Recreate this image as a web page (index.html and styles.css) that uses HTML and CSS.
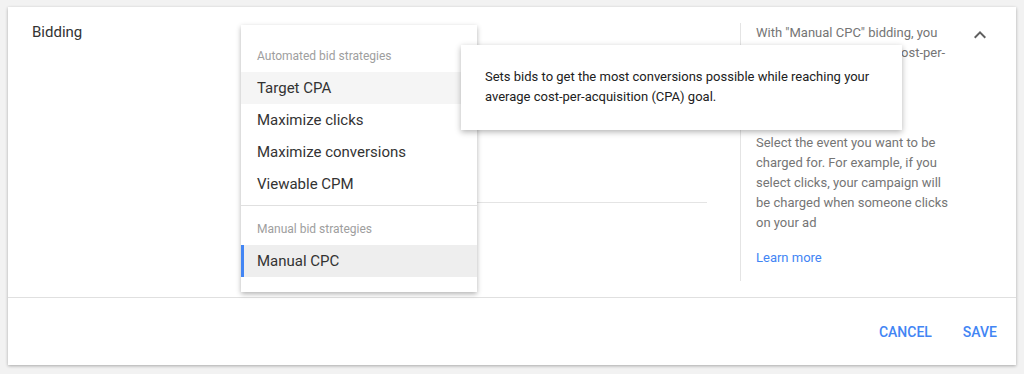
FILE: index.html
```html
<!DOCTYPE html>
<html lang="en">

<head>
  <meta charset="UTF-8" />
  <title>Bidding</title>
  <link rel="stylesheet" href="styles.css">
</head>

<body>
  <div class="card">
    <div class="section">
      <div class="section-label">Bidding</div>
      <div class="section-field">
        <div class="field-input"></div>
      </div>
      <div class="section-help">
        <p class="help-intro">With "Manual CPC" bidding, you set your own maximum cost-per-click (CPC) for your ads.</p>
        <p>Select the event you want to be charged for. For example, if you select clicks, your campaign will be charged when someone clicks on your ad</p>
        <a class="help-link" href="#">Learn more</a>
      </div>
      <div class="section-toggle">
        <svg width="24" height="24" viewBox="0 0 24 24">
          <path d="M7.41 15.41L12 10.83l4.59 4.58L18 14l-6-6-6 6z" fill="#5f5f5f" />
        </svg>
      </div>
    </div>

    <div class="actions">
      <button class="btn">Cancel</button>
      <button class="btn">Save</button>
    </div>

    <div class="menu">
      <div class="menu-group">Automated bid strategies</div>
      <div class="menu-item hover">Target CPA</div>
      <div class="menu-item">Maximize clicks</div>
      <div class="menu-item">Maximize conversions</div>
      <div class="menu-item">Viewable CPM</div>
      <div class="menu-divider"></div>
      <div class="menu-group">Manual bid strategies</div>
      <div class="menu-item selected">Manual CPC</div>
    </div>

    <div class="tooltip">
      Sets bids to get the most conversions possible while reaching your average cost-per-acquisition (CPA) goal.
    </div>
  </div>
</body>

</html>
```

FILE: styles.css
```css
* {
  box-sizing: border-box;
}

html,
body {
  margin: 0;
  padding: 0;
  font-family: Roboto, sans-serif;
  background: #f2f2f2;
}

body {
  padding: 7px 8px;
}

.card {
  position: relative;
  background: white;
  box-shadow: 0 1px 3px rgba(0, 0, 0, 0.3);
}

.section {
  display: flex;
  height: 291px;
  padding: 16px 0 16px 24px;
  border-bottom: 1px solid #e0e0e0;
}

.section-label {
  width: 209px;
  font-size: 15px;
  line-height: 20px;
  margin-top: -1px;
  color: #333;
}

.section-field {
  width: 466px;
}

.field-input {
  height: 180px;
  border-bottom: 1px solid #e4e4e4;
}

.section-help {
  margin-left: 33px;
  width: 228px;
  padding: 0 12px 0 15px;
  border-left: 1px solid #e4e4e4;
  font-size: 13px;
  line-height: 20px;
  color: #757575;
}

.section-help p {
  margin: 0 0 15px;
}

.section-help p.help-intro {
  margin-bottom: 50px;
}

.help-link {
  color: #4285f4;
  text-decoration: none;
}

.section-toggle {
  margin-top: 0;
}

.actions {
  display: flex;
  justify-content: flex-end;
  align-items: center;
  gap: 15px;
  height: 67px;
  padding: 0 11px 0 0;
}

.btn {
  background: none;
  border: none;
  padding: 8px;
  font-family: Roboto, sans-serif;
  font-size: 14px;
  font-weight: 500;
  text-transform: uppercase;
  color: #4285f4;
  cursor: pointer;
}

/* dropdown opened over the field */
.menu {
  position: absolute;
  left: 233px;
  top: 18px;
  width: 236px;
  padding: 15px 0;
  background: white;
  box-shadow: 0 2px 5px rgba(0, 0, 0, 0.3);
}

.menu-group {
  height: 32px;
  line-height: 32px;
  padding-left: 16px;
  font-size: 12px;
  color: #9e9e9e;
}

.menu-item {
  height: 32px;
  line-height: 32px;
  padding-left: 16px;
  font-size: 15px;
  color: #333;
}

.menu-item.hover {
  background: #f5f5f5;
}

.menu-item.selected {
  background: #eeeeee;
  border-left: 3px solid #4285f4;
  padding-left: 13px;
}

.menu-divider {
  margin: 5px 0 7px;
  border-top: 1px solid #e0e0e0;
}

.tooltip {
  position: absolute;
  left: 453px;
  top: 38px;
  width: 441px;
  height: 85px;
  padding: 22px 24px;
  background: white;
  font-size: 13px;
  line-height: 20px;
  color: #212121;
  box-shadow: 0 2px 6px rgba(0, 0, 0, 0.3);
}
```
